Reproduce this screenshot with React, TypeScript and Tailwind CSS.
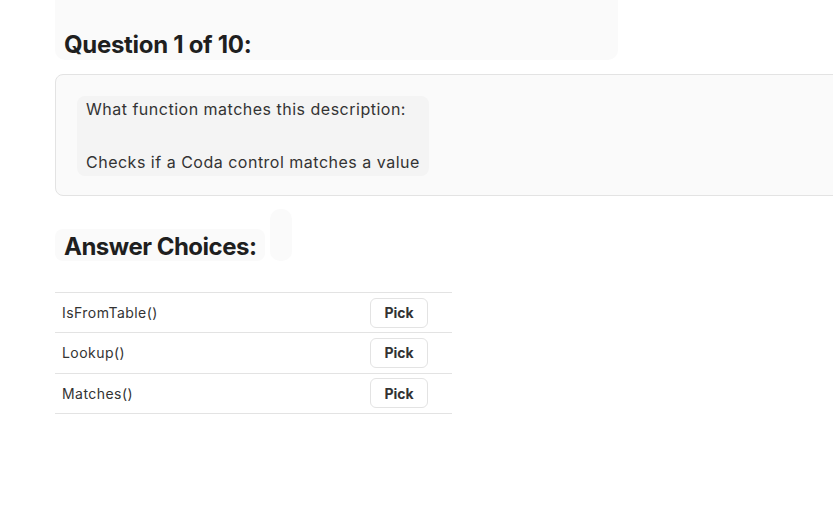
export default function App() {
  const choices = ["IsFromTable()", "Lookup()", "Matches()"];

  return (
    <div
      className="w-[833px] h-[521px] overflow-hidden bg-white text-[#1f1f1f]"
      style={{ fontFamily: "Inter, 'Noto Sans', sans-serif" }}
    >
      <div className="pl-[55px]">
        {/* header */}
        <div className="w-[563px] h-[60px] bg-[#fafafa] rounded-b-[10px] flex items-end pl-[9px] pb-0">
          <h1 className="text-[24px] font-bold tracking-[-0.3px] leading-[30px]">Question 1 of 10:</h1>
        </div>

        {/* question card */}
        <div className="mt-[14px] w-[820px] h-[122px] border border-[#e3e3e3] rounded-[8px] bg-[#fafafa] pt-[21px] pl-[21px]">
          <div className="inline-block bg-[#f4f4f4] rounded-[8px] px-[9px] py-0 text-[16px] tracking-[0.5px] leading-[26.5px] text-[#333]">
            <p>What function matches this description:</p>
            <p>&nbsp;</p>
            <p>Checks if a Coda control matches a value</p>
          </div>
        </div>

        {/* answer heading */}
        <div className="mt-[13px] flex items-end gap-[5px]">
          <div className="w-[210px] h-[32px] bg-[#fafafa] rounded-[8px] pl-[9px] flex items-center pt-[3px]">
            <h2 className="text-[24px] font-bold tracking-[-0.5px] leading-[30px]">Answer Choices:</h2>
          </div>
          <div className="w-[22px] h-[52px] bg-[#fafafa] rounded-[10px]" />
        </div>

        {/* choices table */}
        <div className="mt-[31px] w-[397px] border-t border-[#e3e3e3]">
          {choices.map((c) => (
            <div
              key={c}
              className="h-[40.33px] border-b border-[#e3e3e3] flex items-center justify-between pl-[7px] pr-[24px]"
            >
              <span className="text-[14px] tracking-[0.45px] text-[#333]">{c}</span>
              <button className="w-[58px] h-[30px] border border-[#e3e3e3] rounded-[6px] bg-white text-[14px] font-bold text-[#333]">
                Pick
              </button>
            </div>
          ))}
        </div>
      </div>
    </div>
  );
}
